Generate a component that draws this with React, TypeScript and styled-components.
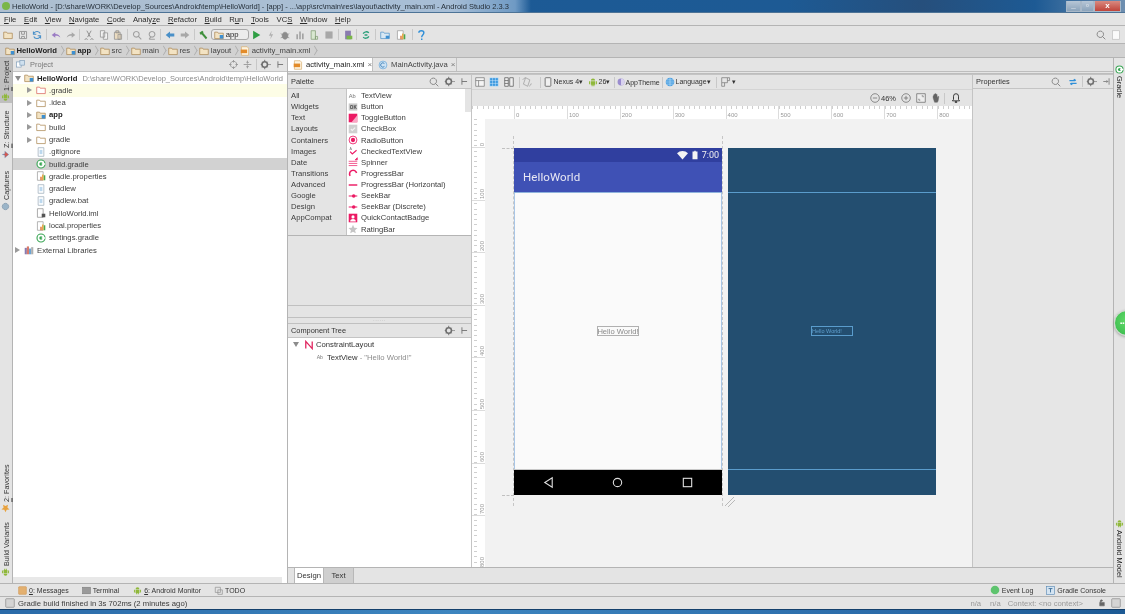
import React from "react";
import styled, { createGlobalStyle } from "styled-components";

const GlobalStyle = createGlobalStyle`
  html, body { margin: 0; padding: 0; background: #e4e4e4; overflow: hidden; }
  body { font-family: "Liberation Sans", Arial, sans-serif; font-size: 7.7px; color: #333; }
  u { text-decoration-thickness: 0.5px; text-underline-offset: 1px; }
`;

const Window = styled.div`
  position: relative;
  width: 1125px;
  height: 614px;
  display: flex;
  flex-direction: column;
  overflow: hidden;
  background: #e4e4e4;
  filter: blur(0.3px);
`;

const TitleBar = styled.div`
  height: 13px;
  flex: none;
  display: flex;
  align-items: center;
  background: linear-gradient(90deg, #1b5a98 0%, #1d5a94 70%, #264f7c 82%, #1d5a94 92%, #6f8fb0 100%);
  border-bottom: 1px solid #4d7396;
  box-sizing: border-box;
`;

const TitleGlow = styled.div`
  height: 12px;
  padding: 0 22px 0 12px;
  display: flex;
  align-items: center;
  color: #26303a;
  font-size: 7.5px;
  white-space: nowrap;
  background: linear-gradient(90deg, #aebfd0, #a7bed6 85%, #6f9ac4 97%, transparent);
`;

const AppIcon = styled.span`
  position: absolute;
  left: 2px;
  top: 2px;
  width: 8px;
  height: 8px;
  border-radius: 50%;
  background: #7ab648;
`;

const WindowButtons = styled.div`
  margin-left: auto;
  margin-right: 4px;
  display: flex;
  height: 11px;
`;

const WindowButton = styled.div<{ $close?: boolean; $w: number }>`
  width: ${(p) => p.$w}px;
  box-sizing: border-box;
  border: 1px solid #a8b8c8;
  border-top: none;
  background: ${(p) => (p.$close ? "linear-gradient(#d98a80,#c0443a)" : "linear-gradient(#b7c6d6,#8ba3bb)")};
  color: #fff;
  font-size: 8px;
  font-weight: bold;
  line-height: 10px;
  text-align: center;
`;

const MenuBar = styled.div`
  height: 13px;
  flex: none;
  box-sizing: border-box;
  display: flex;
  align-items: center;
  gap: 7.6px;
  padding-left: 4px;
  border-bottom: 1px solid #b4b4b4;
  color: #2b2b2b;
`;

const ToolBar = styled.div`
  height: 18px;
  flex: none;
  box-sizing: border-box;
  display: flex;
  align-items: center;
  padding-left: 1px;
  border-bottom: 1px solid #b4b4b4;
`;

const Slot = styled.div<{ $w?: number }>`
  width: ${(p) => p.$w ?? 14.6}px;
  flex: none;
  display: flex;
  align-items: center;
  justify-content: center;
`;

const Sep = styled.div`
  width: 1px;
  height: 11px;
  flex: none;
  margin: 0 1.5px;
  background: #c8c8c8;
`;

const Combo = styled.div`
  width: 38px;
  height: 11px;
  flex: none;
  box-sizing: border-box;
  display: flex;
  align-items: center;
  gap: 2px;
  padding-left: 2px;
  border: 1px solid #a8a8a8;
  border-radius: 3px;
  background: #ececec;
  color: #222;
`;

const Push = styled.div`
  margin-left: auto;
  display: flex;
  padding-right: 2px;
`;

const NavBar = styled.div`
  height: 14px;
  flex: none;
  box-sizing: border-box;
  display: flex;
  align-items: center;
  padding-left: 5px;
  background: #d2d2d2;
  border-bottom: 1px solid #b4b4b4;
`;

const Crumb = styled.div<{ $bold?: boolean }>`
  display: flex;
  align-items: center;
  gap: 1.5px;
  font-weight: ${(p) => (p.$bold ? "bold" : "normal")};
  color: ${(p) => (p.$bold ? "#222" : "#444")};
`;

const Chevron = styled.span`
  width: 7px;
  height: 7px;
  margin: 0 1px;
  box-sizing: border-box;
  border-top: 1px solid #aaa;
  border-right: 1px solid #aaa;
  transform: scaleX(0.6) rotate(45deg);
  flex: none;
`;

const Body = styled.div`
  flex: 1;
  min-height: 0;
  display: flex;
`;

const SideStrip = styled.div<{ $right?: boolean }>`
  width: ${(p) => (p.$right ? 12 : 13)}px;
  flex: none;
  box-sizing: border-box;
  display: flex;
  flex-direction: column;
  align-items: stretch;
  ${(p) => (p.$right ? "border-left: 1px solid #b4b4b4;" : "border-right: 1px solid #b4b4b4;")}
  padding-bottom: 5px;
`;

const SideTab = styled.div<{ $active?: boolean; $h: number; $mt?: number; $right?: boolean }>`
  height: ${(p) => p.$h}px;
  margin-top: ${(p) => p.$mt ?? 0}px;
  flex: none;
  display: flex;
  align-items: center;
  justify-content: flex-start;
  gap: 2px;
  padding: 1px 0;
  box-sizing: border-box;
  writing-mode: vertical-rl;
  transform: ${(p) => (p.$right ? "none" : "rotate(180deg)")};
  background: ${(p) => (p.$active ? "#bfbfbf" : "transparent")};
  color: ${(p) => (p.$right ? "#222" : "#333")};
  font-size: ${(p) => (p.$right ? 7.4 : 7.2)}px;
  white-space: nowrap;
`;

const Grow = styled.div`
  flex: 1;
`;

const ProjectPane = styled.div`
  width: 275px;
  flex: none;
  box-sizing: border-box;
  display: flex;
  flex-direction: column;
  background: #fff;
  border-right: 1px solid #b4b4b4;
`;

const PaneHeader = styled.div<{ $h?: number; $noTop?: boolean }>`
  height: ${(p) => p.$h ?? 14}px;
  flex: none;
  box-sizing: border-box;
  display: flex;
  align-items: center;
  background: #e4e4e4;
  border-bottom: 1px solid #c4c4c4;
  padding: 0 2px 0 3px;
  gap: 2px;
`;

const HeaderTitle = styled.span<{ $muted?: boolean }>`
  font-size: 7.4px;
  color: ${(p) => (p.$muted ? "#777" : "#333")};
`;

const Tree = styled.div`
  flex: 1;
  overflow: hidden;
`;

const TreeRow = styled.div<{ $tone?: "yellow" | "grey"; $indent: number }>`
  height: 12.29px;
  display: flex;
  align-items: center;
  padding-left: ${(p) => p.$indent}px;
  white-space: nowrap;
  overflow: hidden;
  background: ${(p) => (p.$tone === "yellow" ? "#fdfde6" : p.$tone === "grey" ? "#d2d2d2" : "transparent")};
`;

const Arrow = styled.span<{ $open?: boolean; $hidden?: boolean; $ml?: number }>`
  width: 13px;
  margin-left: ${(p) => p.$ml ?? 0}px;
  flex: none;
  display: flex;
  justify-content: center;
  visibility: ${(p) => (p.$hidden ? "hidden" : "visible")};
  &::before {
    content: "";
    border-style: solid;
    border-color: transparent;
    ${(p) =>
      p.$open
        ? "border-width: 5px 3px 0 3px; border-top-color: #8c8c8c;"
        : "border-width: 3px 0 3px 5px; border-left-color: #9a9a9a;"}
  }
`;

const TreeLabel = styled.span<{ $bold?: boolean }>`
  margin-left: 3px;
  font-weight: ${(p) => (p.$bold ? "bold" : "normal")};
  color: ${(p) => (p.$bold ? "#222" : "#3c3c3c")};
`;

const TreePath = styled.span`
  margin-left: 5px;
  color: #8a8a8a;
  font-size: 7.5px;
`;

const HScroll = styled.div`
  height: 6px;
  width: 269px;
  flex: none;
  background: #e8e8e8;
`;

const Editor = styled.div`
  flex: 1;
  min-width: 0;
  display: flex;
  flex-direction: column;
`;

const EditorTabs = styled.div`
  height: 16px;
  flex: none;
  box-sizing: border-box;
  display: flex;
  border-bottom: 3px double #bdbdbd;
`;

const EditorTab = styled.div<{ $active?: boolean; $w: number }>`
  width: ${(p) => p.$w}px;
  flex: none;
  box-sizing: border-box;
  display: flex;
  align-items: center;
  gap: 3px;
  padding-left: 5px;
  border-right: 1px solid #c0c0c0;
  background: ${(p) => (p.$active ? "#fff" : "#e4e4e4")};
  color: ${(p) => (p.$active ? "#222" : "#444")};
`;

const TabClose = styled.span`
  margin-left: auto;
  margin-right: 3px;
  color: #777;
  font-size: 8px;
`;

const DesignArea = styled.div`
  flex: 1;
  min-height: 0;
  display: flex;
`;

const LeftColumn = styled.div`
  width: 184px;
  flex: none;
  box-sizing: border-box;
  display: flex;
  flex-direction: column;
  border-right: 1px solid #c4c4c4;
`;

const PanelHeader = styled(PaneHeader)`
  border-top: ${(p) => (p.$noTop ? "none" : "1px solid #c4c4c4")};
  height: ${(p) => (p.$noTop ? 14 : 15)}px;
`;

const Palette = styled.div`
  height: 146px;
  flex: none;
  display: flex;
  border-bottom: 1px solid #b4b4b4;
`;

const PaletteGroups = styled.div`
  width: 59px;
  flex: none;
  box-sizing: border-box;
  padding: 1px 0 0 3px;
  border-right: 1px solid #c4c4c4;
`;

const PaletteText = styled.div`
  height: 11.14px;
  line-height: 11.14px;
  color: #3c3c3c;
  white-space: nowrap;
`;

const PaletteList = styled.div`
  flex: 1;
  position: relative;
  background: #fff;
  padding-top: 1px;
`;

const PaletteItem = styled.div`
  height: 11.14px;
  display: flex;
  align-items: center;
  gap: 3px;
  padding-left: 1px;
  color: #3c3c3c;
  white-space: nowrap;
`;

const PaletteScroll = styled.div`
  position: absolute;
  right: 0;
  top: 0;
  width: 6px;
  height: 23px;
  background: #e4e4e4;
`;

const Spacer = styled.div<{ $h: number; $line?: boolean }>`
  height: ${(p) => p.$h}px;
  flex: none;
  ${(p) => (p.$line ? "border-bottom: 1px solid #c0c0c0;" : "")}
`;

const Splitter = styled.div`
  height: 5px;
  flex: none;
  border-top: 1px solid #c0c0c0;
  border-bottom: 1px solid #c0c0c0;
  display: flex;
  align-items: center;
  justify-content: center;
  color: #aaa;
  font-size: 5px;
  line-height: 5px;
  letter-spacing: 0.5px;
`;

const ComponentTree = styled.div`
  flex: 1;
  background: #fff;
`;

const CompRow = styled.div<{ $indent: number }>`
  height: 13px;
  display: flex;
  align-items: center;
  gap: 2px;
  padding-left: ${(p) => p.$indent}px;
`;

const Muted = styled.span`
  color: #8c8c8c;
`;

const Center = styled.div`
  flex: 1;
  min-width: 0;
  display: flex;
  flex-direction: column;
`;

const DesignToolbar = styled.div`
  height: 15px;
  flex: none;
  box-sizing: border-box;
  border-top: 1px solid #c4c4c4;
  display: flex;
  align-items: center;
  padding-left: 3px;
  font-size: 7px;
  color: #333;
`;

const DesignItem = styled.div<{ $w: number }>`
  width: ${(p) => p.$w}px;
  flex: none;
  display: flex;
  align-items: center;
  gap: 1px;
  white-space: nowrap;
`;

const ZoomBar = styled.div`
  height: 17px;
  flex: none;
  box-sizing: border-box;
  border-top: 1px solid #d4d4d4;
  display: flex;
  align-items: center;
  justify-content: flex-end;
  gap: 1px;
  padding-right: 11px;
  font-size: 7.5px;
  color: #333;
`;

const RulerTop = styled.div`
  height: 13px;
  flex: none;
  display: flex;
  padding-left: 42px;
  background:
    repeating-linear-gradient(90deg, #cfcfcf 0 1px, transparent 1px 5.29px) 0 0 / 100% 3px no-repeat,
    #fff;
  box-sizing: border-box;
  overflow: hidden;
`;

const RulerCell = styled.div`
  width: 52.9px;
  flex: none;
  box-sizing: border-box;
  padding: 5px 0 0 1px;
  border-left: 1px solid #dcdcdc;
  font-size: 6px;
  line-height: 8px;
  color: #999;
`;

const CanvasRow = styled.div`
  flex: 1;
  min-height: 0;
  display: flex;
`;

const RulerLeft = styled.div`
  width: 13px;
  flex: none;
  background:
    repeating-linear-gradient(180deg, #cfcfcf 0 1px, transparent 1px 5.27px) 2px 0 / 3px 100% no-repeat,
    #fff;
  overflow: hidden;
`;

const RulerLeftCell = styled.div`
  height: 52.6px;
  box-sizing: border-box;
  border-bottom: 1px solid #dcdcdc;
  display: flex;
  justify-content: flex-end;
  align-items: flex-end;
  padding-bottom: 1px;
  font-size: 6px;
  color: #999;
  &:first-child {
    height: 29px;
  }
  & > span {
    writing-mode: vertical-rl;
    transform: rotate(180deg);
  }
`;

const Canvas = styled.div`
  position: relative;
  flex: 1;
  min-width: 0;
  display: flex;
  align-items: flex-start;
  gap: 6px;
  padding: 29px 0 0 29px;
  background: #f2f2f2;
  overflow: hidden;
`;

const Phone = styled.div`
  width: 208px;
  height: 347px;
  flex: none;
  display: flex;
  flex-direction: column;
`;

const StatusStrip = styled.div`
  height: 14px;
  flex: none;
  display: flex;
  align-items: center;
  justify-content: flex-end;
  gap: 2px;
  padding-right: 3px;
  background: #303f9f;
  color: #f0f0f0;
  font-family: Roboto, "Liberation Sans", sans-serif;
  font-size: 9px;
`;

const AppBar = styled.div`
  height: 31px;
  flex: none;
  box-sizing: border-box;
  display: flex;
  align-items: center;
  padding-left: 9px;
  background: #3f51b5;
  color: #e8e8f4;
  font-family: Roboto, "Liberation Sans", sans-serif;
  font-size: 11.5px;
  letter-spacing: 0.1px;
  border-bottom: 1px solid #8fb3dc;
`;

const PhoneContent = styled.div`
  flex: 1;
  display: flex;
  align-items: center;
  justify-content: center;
  box-sizing: border-box;
  background: #fafafa;
  border-left: 1px solid #a9c6e6;
  border-right: 1px solid #a9c6e6;
`;

const HelloBox = styled.div`
  width: 42px;
  height: 10px;
  box-sizing: border-box;
  display: flex;
  align-items: center;
  justify-content: center;
  border: 1px solid #b0b0b0;
  color: #8a8a8a;
  font-size: 7.6px;
  white-space: nowrap;
`;

const NavStrip = styled.div`
  height: 26px;
  flex: none;
  display: flex;
  align-items: center;
  justify-content: space-around;
  background: #000;
  border-top: 1px solid #c8c8c8;
  box-sizing: border-box;
`;

const Blueprint = styled.div`
  width: 208px;
  height: 347px;
  flex: none;
  box-sizing: border-box;
  display: flex;
  flex-direction: column;
  background: #234e70;
`;

const BlueTop = styled.div`
  height: 44px;
  flex: none;
  border-bottom: 1px solid #5a9ccc;
`;

const BlueMiddle = styled.div`
  flex: 1;
  display: flex;
  align-items: center;
  justify-content: center;
  border-bottom: 1px solid #5a9ccc;
`;

const BlueBox = styled.div`
  width: 42px;
  height: 10px;
  box-sizing: border-box;
  border: 1px solid #5a9ccc;
  color: #5f9fce;
  font-size: 5.5px;
  line-height: 8px;
  white-space: nowrap;
  overflow: hidden;
`;

const BlueBottom = styled.div`
  height: 25px;
  flex: none;
`;

/* guides and the resize handle lie over the free canvas */
const GuideV = styled.div<{ $x: number }>`
  position: absolute;
  left: ${(p) => p.$x}px;
  top: 17px;
  height: 370px;
  border-left: 1px dashed #c6c6c6;
`;

const GuideH = styled.div<{ $y: number }>`
  position: absolute;
  left: 17px;
  top: ${(p) => p.$y}px;
  width: 12px;
  border-top: 1px dashed #c0c0c0;
`;

const ResizeHandle = styled.svg`
  position: absolute;
  left: 239px;
  top: 377px;
`;

const Properties = styled.div`
  width: 141px;
  flex: none;
  box-sizing: border-box;
  border-left: 1px solid #c4c4c4;
  background: #e6e6e6;
`;

const DesignTabs = styled.div`
  height: 16px;
  flex: none;
  box-sizing: border-box;
  display: flex;
  padding-left: 6px;
  border-top: 1px solid #b4b4b4;
`;

const DesignTab = styled.div<{ $active?: boolean }>`
  width: 30px;
  flex: none;
  box-sizing: border-box;
  display: flex;
  align-items: center;
  justify-content: center;
  background: ${(p) => (p.$active ? "#fff" : "#cfcfcf")};
  border-right: 1px solid #b8b8b8;
  ${(p) => (p.$active ? "border-left: 1px solid #b8b8b8;" : "")}
  color: #333;
`;

const BottomBar = styled.div`
  height: 14px;
  flex: none;
  box-sizing: border-box;
  display: flex;
  align-items: center;
  padding: 0 19px 0 18px;
  border-top: 1px solid #b4b4b4;
  border-bottom: 1px solid #b4b4b4;
  color: #333;
  font-size: 7px;
`;

const BottomItem = styled.div<{ $ml?: number }>`
  display: flex;
  align-items: center;
  gap: 2px;
  margin-left: ${(p) => p.$ml ?? 0}px;
  white-space: nowrap;
`;

const StatusBar = styled.div`
  height: 12px;
  flex: none;
  display: flex;
  align-items: center;
  gap: 3px;
  padding: 0 4px 0 5px;
  color: #3a3a3a;
`;

const StatusRight = styled.div`
  margin-left: auto;
  display: flex;
  align-items: center;
  color: #999;
`;

const Taskbar = styled.div`
  height: 5px;
  flex: none;
  background: linear-gradient(90deg, #2a6aa8, #3d85bf 40%, #2a6aa8 80%, #1d5a94);
  border-top: 1px solid #14406c;
  box-sizing: border-box;
`;

const GreenBubble = styled.div`
  position: absolute;
  left: 1114px;
  top: 310px;
  width: 26px;
  height: 26px;
  box-sizing: border-box;
  border: 1px solid #cfd8cf;
  border-radius: 50%;
  background: radial-gradient(circle at 50% 40%, #63da6a, #34b84a);
  box-shadow: 0 1px 3px rgba(0, 0, 0, 0.3);
  color: #fff;
  font-size: 6px;
  line-height: 24px;
  padding-left: 5px;
`;

const Svg = styled.svg`
  flex: none;
  display: block;
`;

type IconName =
  | "folder" | "save" | "sync" | "undo" | "redo" | "cut" | "copy" | "paste" | "find" | "replace"
  | "back" | "forward" | "hammer" | "run" | "bolt" | "bug" | "attach" | "device" | "stop" | "avd"
  | "gradleSync" | "sdk" | "help" | "search" | "user" | "gear" | "pin" | "pinR" | "target" | "collapse"
  | "xml" | "java" | "module" | "redFolder" | "plainFolder" | "file" | "gradle" | "props" | "iml" | "libs"
  | "android" | "star" | "camera" | "tree" | "projectBox" | "msg" | "term" | "todo" | "bubble" | "console"
  | "frame" | "lock" | "swap" | "ab" | "ok" | "toggle" | "check" | "radio" | "checked" | "spinner"
  | "progress" | "hbar" | "seek" | "badge" | "rating" | "constraint" | "lay1" | "lay2" | "lay3" | "orient"
  | "phone" | "theme" | "globe" | "layout" | "minus" | "plus" | "fit" | "hand" | "bell" | "wifi" | "battery"
  | "navBack" | "navHome" | "navRecent";

const folderD = "M1 3h4l1 1.5h7V12H1z";

const paths: Record<IconName, React.ReactNode> = {
  folder: <path d={folderD} fill="#f3e3c3" stroke="#a9854f" />,
  plainFolder: <path d={folderD} fill="#fff" stroke="#a9854f" />,
  redFolder: <path d={folderD} fill="#fff" stroke="#d8605a" />,
  module: (
    <>
      <path d={folderD} fill="#f3e3c3" stroke="#a9854f" />
      <rect x="8" y="7" width="5" height="5" fill="#3d8fd1" />
    </>
  ),
  save: <path d="M2 2h10v10H2zM5 2v4h4V2M5 12V9h4v3" fill="none" stroke="#9a9a9a" strokeWidth="1.4" />,
  sync: <path d="M11.5 5A5 5 0 0 0 3 4L2 6M2.5 9A5 5 0 0 0 11 10l1-2M2 2v4h4M12 12V8H8" fill="none" stroke="#4a90c8" strokeWidth="1.5" />,
  undo: <path d="M1 7l5-4v2.5c4 0 6 2 7 5-2-2-4-2.5-7-2.5V11z" fill="#9b7cc4" />,
  redo: <path d="M13 7L8 3v2.5c-4 0-6 2-7 5 2-2 4-2.5 7-2.5V11z" fill="#a8a8a8" />,
  cut: <path d="M4 1l5 9M10 1L5 10M3 12a1.5 1.5 0 1 0 .1 0M11 12a1.5 1.5 0 1 0 .1 0" fill="none" stroke="#8c8c8c" strokeWidth="1.3" />,
  copy: <path d="M2 1h6v9H2zM6 4h6v9H6z" fill="#f2f2f2" stroke="#8c8c8c" />,
  paste: <path d="M2 3h8v10H2zM7 6h5v7H7zM4 1h4v3H4z" fill="#ecdcc0" stroke="#8c8c8c" />,
  find: <path d="M6 2a4 4 0 1 0 .1 0M9 9l4 4" fill="none" stroke="#a0a0a0" strokeWidth="1.5" />,
  replace: <path d="M7 2a4 4 0 1 0 .1 0M3 13h8M5 10l-2 3" fill="none" stroke="#a0a0a0" strokeWidth="1.5" />,
  back: <path d="M1 7l6-5v3h6v4H7v3z" fill="#4a90c8" />,
  forward: <path d="M13 7L7 2v3H1v4h6v3z" fill="#a8a8a8" />,
  hammer: <path d="M2 4l4-3 2 2-1 1 6 7-2 2-6-7-1 1z" fill="#3f8f3c" />,
  run: <path d="M3 1l10 6-10 6z" fill="#2f9e44" />,
  bolt: <path d="M8 1L4 8h3l-1 5 4-7H7z" fill="#b0b0b0" />,
  bug: <path d="M7 3a4 5 0 1 0 .1 0M1 5l3 2M13 5l-3 2M1 11l3-1M13 11l-3-1" fill="#8c8c8c" stroke="#8c8c8c" />,
  attach: <path d="M2 6h2v7H2zM6 2h2v11H6zM10 5h2v8h-2z" fill="#9a9a9a" />,
  device: <path d="M3 1h6v12H3z M9 9h3v4H9z" fill="#d8e8d0" stroke="#7f9a72" />,
  stop: <rect x="2" y="2" width="10" height="10" fill="#a8a8a8" />,
  avd: (
    <>
      <rect x="3" y="1" width="8" height="12" fill="#8a7bb0" />
      <rect x="5" y="8" width="8" height="5" fill="#7ab648" />
    </>
  ),
  gradleSync: <path d="M11 4A5 5 0 0 0 3 5M3 10a5 5 0 0 0 8-1M5 7h4" fill="none" stroke="#2aa07a" strokeWidth="1.8" />,
  sdk: (
    <>
      <path d={folderD} fill="#d8e8f4" stroke="#4a90c8" />
      <rect x="8" y="8" width="5" height="4" fill="#3d8fd1" />
    </>
  ),
  help: <path d="M4 4c0-4 7-4 7 0 0 3-3 3-3 6M8 12v2" fill="none" stroke="#2f8fd8" strokeWidth="2" />,
  search: <path d="M6 1.5a4.5 4.5 0 1 0 .1 0M9.5 9.5L13 13" fill="none" stroke="#8a8a8a" strokeWidth="1.4" />,
  user: <rect x="2" y="1" width="10" height="12" fill="#fafafa" stroke="#c0c0c0" />,
  gear: (
    <>
      <circle cx="6" cy="7" r="3.5" fill="none" stroke="#6e6e6e" strokeWidth="2" />
      <path d="M6 1v2M6 11v2M1 7h2M9 7h2M2.5 3.5l1.5 1.5M9.5 3.5L8 5M2.5 10.5L4 9M9.5 10.5L8 9" stroke="#6e6e6e" strokeWidth="1.2" />
      <path d="M11.5 6.5h2.5l-1.25 1.5z" fill="#6e6e6e" />
    </>
  ),
  pin: <path d="M3 2v10M3 7h8" fill="none" stroke="#707070" strokeWidth="1.4" />,
  pinR: <path d="M11 2v10M2 7h7M7 5l2 2-2 2" fill="none" stroke="#707070" strokeWidth="1.2" />,
  target: <path d="M7 2a5 5 0 1 0 .1 0M7 0v4M7 10v4M0 7h4M10 7h4" fill="none" stroke="#8c8c8c" strokeWidth="1.2" />,
  collapse: <path d="M7 1v4M7 9v4M1 7h12M5 3l2 2 2-2M5 11l2-2 2 2" fill="none" stroke="#8c8c8c" strokeWidth="1.2" />,
  xml: (
    <>
      <path d="M2 1h8l2 2v10H2z" fill="#fdf3df" stroke="#d9b277" />
      <rect x="1" y="5" width="9" height="5" fill="#e38b28" />
    </>
  ),
  java: (
    <>
      <circle cx="7" cy="7" r="5.5" fill="#cfe4f5" stroke="#6aa6d6" />
      <path d="M9 5a3 3 0 1 0 0 4" fill="none" stroke="#3d7fb8" strokeWidth="1.3" />
    </>
  ),
  file: (
    <>
      <path d="M3 1h8v12H3z" fill="#fff" stroke="#9aaab8" />
      <rect x="5" y="4" width="4" height="6" fill="#bcd8ee" />
    </>
  ),
  gradle: (
    <>
      <circle cx="7" cy="7" r="5.6" fill="#fff" stroke="#3aa655" strokeWidth="1.6" />
      <circle cx="7" cy="7" r="2.4" fill="#3aa655" />
      <rect x="8" y="6" width="5" height="2" fill="#fff" />
    </>
  ),
  props: (
    <>
      <path d="M2 1h8v12H2z" fill="#fff" stroke="#9a9a9a" />
      <rect x="6" y="8" width="2" height="5" fill="#e0703a" />
      <rect x="8.5" y="5" width="2" height="8" fill="#e8a83a" />
      <rect x="11" y="6" width="2" height="7" fill="#4aa84a" />
    </>
  ),
  iml: (
    <>
      <path d="M2 1h8v12H2z" fill="#fff" stroke="#8c8c8c" />
      <rect x="8" y="8" width="5" height="5" fill="#555" />
    </>
  ),
  libs: (
    <>
      <rect x="1" y="4" width="3" height="9" fill="#8a7bb0" />
      <rect x="4" y="2" width="3" height="11" fill="#d87a6a" />
      <rect x="7" y="5" width="3" height="8" fill="#6aa6d6" />
      <rect x="10" y="3" width="3" height="10" fill="#b0b0b0" />
    </>
  ),
  android: <path d="M4 5a3 3 0 0 1 6 0zM4 6h6v5H4zM1.5 6h1.5v4H1.5zM11 6h1.5v4H11zM5 11h1.5v2H5zM7.5 11H9v2H7.5z" fill="#8fb83a" />,
  star: <path d="M7 1l1.8 4.2 4.5.4-3.4 3 1 4.4L7 10.8 3.100 13l1-4.4-3.400-3 4.500-.4z" fill="#e8a13c" />,
  camera: <path d="M7 2a5 5 0 1 0 .1 0" fill="#9ab4c8" stroke="#7a92a6" />,
  tree: <path d="M2 7l6-5v4l4 1-4 1v4z" fill="#d8584e" stroke="#4a90c8" strokeWidth="0.6" />,
  projectBox: (
    <>
      <rect x="1" y="3" width="7" height="8" fill="#fff" stroke="#7a9ab8" />
      <rect x="6" y="1" width="7" height="7" fill="#cfe0ee" stroke="#7a9ab8" />
    </>
  ),
  msg: <rect x="1" y="1" width="12" height="12" rx="1" fill="#e3b070" stroke="#d09a58" />,
  term: <rect x="1" y="2" width="12" height="10" fill="#9a9a9a" stroke="#7f7f7f" />,
  todo: <path d="M2 2h8v8H2zM6 6h7v7H6z" fill="#e4e4e4" stroke="#8c8c8c" />,
  bubble: <circle cx="7" cy="7" r="6" fill="#5ec46e" />,
  console: (
    <>
      <rect x="1" y="1" width="12" height="12" fill="#d4e4f2" stroke="#5c8db8" />
      <path d="M4 4h6M7 4v6" stroke="#3d6f9a" strokeWidth="1.4" />
    </>
  ),
  frame: <rect x="1" y="1" width="12" height="12" rx="1" fill="#d4d4d4" stroke="#8c8c8c" />,
  lock: <path d="M4 6V3.500a2 2 0 0 1 4 0M3 6h8v6H3z" fill="#666" stroke="#666" />,
  swap: <path d="M2 5h8M8 3l3 2M12 9H4M6 11L3 9" fill="none" stroke="#2f8fd8" strokeWidth="1.6" />,
  ab: <text x="1" y="10" fontSize="8" fontFamily="Liberation Sans" fill="#777">Ab</text>,
  ok: (
    <>
      <rect x="1" y="2" width="12" height="10" fill="#c8c8c8" />
      <text x="2.5" y="10" fontSize="6.5" fontWeight="bold" fontFamily="Liberation Sans" fill="#444">OK</text>
    </>
  ),
  toggle: (
    <>
      <rect x="1" y="1" width="12" height="12" fill="#ec1a64" />
      <path d="M5 13L13 3v10z" fill="#f8a8c4" />
    </>
  ),
  check: (
    <>
      <rect x="1" y="1" width="12" height="12" fill="#cfcfcf" />
      <path d="M4 7l2 2 4-4" fill="none" stroke="#f4f4f4" strokeWidth="1.5" />
    </>
  ),
  radio: (
    <>
      <circle cx="7" cy="7" r="5.500" fill="none" stroke="#ec1a64" strokeWidth="1.2" />
      <circle cx="7" cy="7" r="3" fill="#ec1a64" />
    </>
  ),
  checked: (
    <>
      <path d="M3 8l3 3 6-5" fill="none" stroke="#ec1a64" strokeWidth="1.6" />
      <text x="2" y="6" fontSize="5" fontFamily="Liberation Sans" fill="#777">A</text>
    </>
  ),
  spinner: <path d="M1 6h12M1 9h12M1 12h12M13 1v3h-3z" stroke="#ec1a64" fill="#ec1a64" strokeWidth="1" />,
  progress: <path d="M3 11A5 5 0 1 1 12 7" fill="none" stroke="#ec1a64" strokeWidth="2.2" />,
  hbar: <rect x="1" y="6" width="12" height="2" fill="#ec1a64" />,
  seek: (
    <>
      <rect x="1" y="6.300" width="12" height="1.400" fill="#ec1a64" />
      <circle cx="8" cy="7" r="2.500" fill="#ec1a64" />
    </>
  ),
  badge: (
    <>
      <rect x="1" y="1" width="12" height="12" fill="#ec1a64" />
      <circle cx="7" cy="5.500" r="2.200" fill="#fff" />
      <path d="M3 12a4 3.500 0 0 1 8 0z" fill="#fff" />
    </>
  ),
  rating: <path d="M7 1l1.800 4.200 4.500.4-3.400 3 1 4.400L7 10.800 3.100 13l1-4.400-3.400-3 4.500-.4z" fill="#c4c4c4" />,
  constraint: <path d="M2.500 12V2l9 10V2" fill="none" stroke="#e0245e" strokeWidth="1.800" />,
  lay1: <path d="M1 1h12v12H1zM1 5h12M5 5v8" fill="#f4f4f4" stroke="#777" />,
  lay2: <path d="M1 1h12v12H1zM1 5h12M1 9h12M5 1v12M9 1v12" fill="#3d9ae0" stroke="#e8f4ff" strokeWidth="0.600" />,
  lay3: <path d="M1 1h5v12H1zM8 1h5v12H8zM1 5h5M1 9h5" fill="#f0f0f0" stroke="#555" />,
  orient: <path d="M5 1l6 3-3 9-6-3zM1 4a6 6 0 0 1 4-3M13 9a6 6 0 0 1-3 4" fill="none" stroke="#999" />,
  phone: <rect x="3" y="1" width="8" height="12" rx="1" fill="#f0f0f0" stroke="#666" strokeWidth="1.200" />,
  theme: (
    <>
      <circle cx="7" cy="7" r="6" fill="#9a8ccf" />
      <path d="M7 1a6 6 0 0 1 0 12z" fill="#d8d2ee" />
    </>
  ),
  globe: (
    <>
      <circle cx="7" cy="7" r="6" fill="#4a9ee0" />
      <path d="M1 7h12M7 1v12M2 4h10M2 10h10" stroke="#d4ecfc" strokeWidth="0.700" />
    </>
  ),
  layout: <path d="M1 1h8v7H1zM1 8v5h4V8M9 1h3v4H9" fill="none" stroke="#777" />,
  minus: <path d="M7 1a6 6 0 1 0 .1 0M4 7h6" fill="none" stroke="#666" />,
  plus: <path d="M7 1a6 6 0 1 0 .1 0M4 7h6M7 4v6" fill="none" stroke="#666" />,
  fit: <path d="M1 1h12v12H1zM8 4h2v2M4 10V8M4 10h2" fill="#eee" stroke="#666" />,
  hand: <path d="M3 7V4h1v3-5h1.500v5V1H7v6V2h1.500v5l1-2H11l-1 6-1 2H5z" fill="#666" stroke="#666" strokeWidth="0.600" />,
  bell: <path d="M7 1a3.500 3.500 0 0 0-3.500 3.500V9L2 11h10l-1.500-2V4.500A3.500 3.500 0 0 0 7 1zM6 12h2v1.500H6z" fill="none" stroke="#222" strokeWidth="1.200" />,
  wifi: <path d="M0 4a10 10 0 0 1 14 0L7 12z" fill="#f4f4f4" />,
  battery: <path d="M3.500 2H6V1h2v1h2.500v11h-7z" fill="#f4f4f4" />,
  navBack: <path d="M11 2v10L3 7z" fill="none" stroke="#ddd" strokeWidth="1.200" />,
  navHome: <circle cx="7" cy="7" r="4.500" fill="none" stroke="#ddd" strokeWidth="1.200" />,
  navRecent: <rect x="2.500" y="2.500" width="9" height="9" fill="none" stroke="#ddd" strokeWidth="1.200" />,
};

const Icon = ({ name, size = 10 }: { name: IconName; size?: number }) => (
  <Svg width={size} height={size} viewBox="0 0 14 14">
    {paths[name]}
  </Svg>
);

const menus: [string, string, string][] = [
  ["", "F", "ile"], ["", "E", "dit"], ["", "V", "iew"], ["", "N", "avigate"], ["", "C", "ode"],
  ["Analy", "z", "e"], ["", "R", "efactor"], ["", "B", "uild"], ["R", "u", "n"], ["", "T", "ools"],
  ["VC", "S", ""], ["", "W", "indow"], ["", "H", "elp"],
];

type ToolGroup = IconName[];
const toolsA: ToolGroup[] = [
  ["folder", "save", "sync"],
  ["undo", "redo"],
  ["cut", "copy", "paste"],
  ["find", "replace"],
  ["back", "forward"],
];
const toolsB: ToolGroup[] = [
  ["run", "bolt", "bug", "attach", "device", "stop"],
  ["avd"],
  ["gradleSync"],
  ["sdk", "props"],
  ["help"],
];

const crumbs: { icon: IconName; label: string; bold?: boolean }[] = [
  { icon: "module", label: "HelloWorld", bold: true },
  { icon: "module", label: "app", bold: true },
  { icon: "folder", label: "src" },
  { icon: "folder", label: "main" },
  { icon: "folder", label: "res" },
  { icon: "folder", label: "layout" },
  { icon: "xml", label: "activity_main.xml" },
];

const treeItems: { icon: IconName; label: string; arrow?: boolean; bold?: boolean; tone?: "yellow" | "grey" }[] = [
  { icon: "redFolder", label: ".gradle", arrow: true, tone: "yellow" },
  { icon: "plainFolder", label: ".idea", arrow: true },
  { icon: "module", label: "app", arrow: true, bold: true },
  { icon: "plainFolder", label: "build", arrow: true },
  { icon: "plainFolder", label: "gradle", arrow: true },
  { icon: "file", label: ".gitignore" },
  { icon: "gradle", label: "build.gradle", tone: "grey" },
  { icon: "props", label: "gradle.properties" },
  { icon: "file", label: "gradlew" },
  { icon: "file", label: "gradlew.bat" },
  { icon: "iml", label: "HelloWorld.iml" },
  { icon: "props", label: "local.properties" },
  { icon: "gradle", label: "settings.gradle" },
];

const groups = ["All", "Widgets", "Text", "Layouts", "Containers", "Images", "Date", "Transitions", "Advanced", "Google", "Design", "AppCompat"];

const widgets: [IconName, string][] = [
  ["ab", "TextView"], ["ok", "Button"], ["toggle", "ToggleButton"], ["check", "CheckBox"],
  ["radio", "RadioButton"], ["checked", "CheckedTextView"], ["spinner", "Spinner"], ["progress", "ProgressBar"],
  ["hbar", "ProgressBar (Horizontal)"], ["seek", "SeekBar"], ["seek", "SeekBar (Discrete)"],
  ["badge", "QuickContactBadge"], ["rating", "RatingBar"],
];

const ticks = [0, 100, 200, 300, 400, 500, 600, 700, 800];

export default function App() {
  return (
    <>
      <GlobalStyle />
      <Window>
        <TitleBar>
          <AppIcon />
          <TitleGlow>
            HelloWorld - [D:\share\WORK\Develop_Sources\Android\temp\HelloWorld] - [app] - ...\app\src\main\res\layout\activity_main.xml - Android Studio 2.3.3
          </TitleGlow>
          <WindowButtons>
            <WindowButton $w={15}>_</WindowButton>
            <WindowButton $w={13}>▫</WindowButton>
            <WindowButton $w={27} $close>x</WindowButton>
          </WindowButtons>
        </TitleBar>

        <MenuBar>
          {menus.map(([a, b, c]) => (
            <span key={a + b + c}>
              {a}
              <u>{b}</u>
              {c}
            </span>
          ))}
        </MenuBar>

        <ToolBar>
          {toolsA.map((g, i) => (
            <React.Fragment key={i}>
              {g.map((n) => (
                <Slot key={n}>
                  <Icon name={n} />
                </Slot>
              ))}
              <Sep />
            </React.Fragment>
          ))}
          <Slot>
            <Icon name="hammer" />
          </Slot>
          <Combo>
            <Icon name="module" />
            app
          </Combo>
          {toolsB.map((g, i) => (
            <React.Fragment key={i}>
              {g.map((n) => (
                <Slot key={n} $w={n === "props" ? 18 : 14.6}>
                  <Icon name={n} />
                </Slot>
              ))}
              {i < toolsB.length - 1 && <Sep />}
            </React.Fragment>
          ))}
          <Push>
            <Slot><Icon name="search" /></Slot>
            <Slot><Icon name="user" /></Slot>
          </Push>
        </ToolBar>

        <NavBar>
          {crumbs.map((c) => (
            <React.Fragment key={c.label}>
              <Crumb $bold={c.bold}>
                <Icon name={c.icon} />
                {c.label}
              </Crumb>
              <Chevron />
            </React.Fragment>
          ))}
        </NavBar>

        <Body>
          <SideStrip>
            <SideTab $active $h={45}>
              <Icon name="android" size={9} />
              <span><u>1</u>: Project</span>
            </SideTab>
            <SideTab $h={48} $mt={9}>
              <Icon name="tree" size={9} />
              <span><u>Z</u>: Structure</span>
            </SideTab>
            <SideTab $h={42} $mt={10}>
              <Icon name="camera" size={9} />
              <span>Captures</span>
            </SideTab>
            <Grow />
            <SideTab $h={48}>
              <Icon name="star" size={9} />
              <span><u>2</u>: Favorites</span>
            </SideTab>
            <SideTab $h={60} $mt={4}>
              <Icon name="android" size={9} />
              <span>Build Variants</span>
            </SideTab>
          </SideStrip>

          <ProjectPane>
            <PaneHeader>
              <Icon name="projectBox" size={9} />
              <Slot $w={1} />
              <HeaderTitle $muted>Project</HeaderTitle>
              <Grow />
              <Icon name="target" size={9} />
              <Slot $w={1} />
              <Icon name="collapse" size={9} />
              <Sep />
              <Icon name="gear" size={11} />
              <Slot $w={1} />
              <Icon name="pin" size={9} />
            </PaneHeader>
            <Tree>
              <TreeRow $indent={0}>
                <Arrow $open $ml={-2} />
                <Icon name="module" />
                <TreeLabel $bold>HelloWorld</TreeLabel>
                <TreePath>D:\share\WORK\Develop_Sources\Android\temp\HelloWorld</TreePath>
              </TreeRow>
              {treeItems.map((t) => (
                <TreeRow key={t.label} $indent={10} $tone={t.tone}>
                  <Arrow $hidden={!t.arrow} />
                  <Icon name={t.icon} />
                  <TreeLabel $bold={t.bold}>{t.label}</TreeLabel>
                </TreeRow>
              ))}
              <TreeRow $indent={0}>
                <Arrow $ml={-2} />
                <Icon name="libs" />
                <TreeLabel>External Libraries</TreeLabel>
              </TreeRow>
            </Tree>
            <HScroll />
          </ProjectPane>

          <Editor>
            <EditorTabs>
              <EditorTab $active $w={85}>
                <Icon name="xml" />
                activity_main.xml
                <TabClose>×</TabClose>
              </EditorTab>
              <EditorTab $w={84}>
                <Icon name="java" />
                MainActivity.java
                <TabClose>×</TabClose>
              </EditorTab>
            </EditorTabs>

            <DesignArea>
              <LeftColumn>
                <PanelHeader>
                  <HeaderTitle>Palette</HeaderTitle>
                  <Grow />
                  <Icon name="search" />
                  <Slot $w={1} />
                  <Icon name="gear" size={11} />
                  <Slot $w={1} />
                  <Icon name="pin" size={9} />
                </PanelHeader>
                <Palette>
                  <PaletteGroups>
                    {groups.map((g) => (
                      <PaletteText key={g}>{g}</PaletteText>
                    ))}
                  </PaletteGroups>
                  <PaletteList>
                    {widgets.map(([icon, label]) => (
                      <PaletteItem key={label}>
                        <Icon name={icon} />
                        {label}
                      </PaletteItem>
                    ))}
                    <PaletteScroll />
                  </PaletteList>
                </Palette>
                <Spacer $h={69} $line />
                <Spacer $h={11} />
                <Splitter>······</Splitter>
                <PanelHeader $noTop>
                  <HeaderTitle>Component Tree</HeaderTitle>
                  <Grow />
                  <Icon name="gear" size={11} />
                  <Slot $w={1} />
                  <Icon name="pin" size={9} />
                </PanelHeader>
                <ComponentTree>
                  <CompRow $indent={1}>
                    <Arrow $open />
                    <Icon name="constraint" />
                    ConstraintLayout
                  </CompRow>
                  <CompRow $indent={28}>
                    <Icon name="ab" size={9} />
                    <span>TextView</span>
                    <Muted>- "Hello World!"</Muted>
                  </CompRow>
                </ComponentTree>
              </LeftColumn>

              <Center>
                <DesignToolbar>
                  <DesignItem $w={14}><Icon name="lay1" /></DesignItem>
                  <DesignItem $w={15}><Icon name="lay2" /></DesignItem>
                  <DesignItem $w={13.5}><Icon name="lay3" /></DesignItem>
                  <Sep />
                  <DesignItem $w={17}><Icon name="orient" /></DesignItem>
                  <Sep />
                  <DesignItem $w={41}><Icon name="phone" />Nexus 4▾</DesignItem>
                  <Slot $w={4} />
                  <DesignItem $w={25}><Icon name="android" />26▾</DesignItem>
                  <Sep />
                  <DesignItem $w={44}><Icon name="theme" size={8} />AppTheme</DesignItem>
                  <Sep />
                  <DesignItem $w={50}><Icon name="globe" />Language▾</DesignItem>
                  <Sep />
                  <Slot $w={2} />
                  <DesignItem $w={20}><Icon name="layout" />▾</DesignItem>
                </DesignToolbar>
                <ZoomBar>
                  <Icon name="minus" />
                  <span>46%</span>
                  <Slot $w={3} />
                  <Icon name="plus" />
                  <Slot $w={3} />
                  <Icon name="fit" />
                  <Slot $w={3} />
                  <Icon name="hand" />
                  <Sep />
                  <Slot $w={3} />
                  <Icon name="bell" />
                </ZoomBar>
                <RulerTop>
                  {ticks.map((t) => (
                    <RulerCell key={t}>{t}</RulerCell>
                  ))}
                </RulerTop>
                <CanvasRow>
                  <RulerLeft>
                    {ticks.map((t) => (
                      <RulerLeftCell key={t}>
                        <span>{t}</span>
                      </RulerLeftCell>
                    ))}
                  </RulerLeft>
                  <Canvas>
                    <Phone>
                      <StatusStrip>
                        <Icon name="wifi" size={11} />
                        <Icon name="battery" size={10} />
                        <span>7:00</span>
                      </StatusStrip>
                      <AppBar>HelloWorld</AppBar>
                      <PhoneContent>
                        <HelloBox>Hello World!</HelloBox>
                      </PhoneContent>
                      <NavStrip>
                        <Icon name="navBack" size={13} />
                        <Icon name="navHome" size={13} />
                        <Icon name="navRecent" size={13} />
                      </NavStrip>
                    </Phone>
                    <Blueprint>
                      <BlueTop />
                      <BlueMiddle>
                        <BlueBox>Hello World!</BlueBox>
                      </BlueMiddle>
                      <BlueBottom />
                    </Blueprint>
                    <GuideV $x={28} />
                    <GuideV $x={237} />
                    <GuideH $y={29} />
                    <GuideH $y={376} />
                    <ResizeHandle width="12" height="12" viewBox="0 0 12 12">
                      <path d="M1 10l9-9M4 11l7-7" stroke="#aaa" strokeWidth="0.8" fill="none" />
                    </ResizeHandle>
                  </Canvas>
                </CanvasRow>
              </Center>

              <Properties>
                <PanelHeader>
                  <HeaderTitle>Properties</HeaderTitle>
                  <Grow />
                  <Icon name="search" />
                  <Slot $w={3} />
                  <Icon name="swap" />
                  <Sep />
                  <Icon name="gear" size={11} />
                  <Slot $w={1} />
                  <Icon name="pinR" size={9} />
                </PanelHeader>
              </Properties>
            </DesignArea>

            <DesignTabs>
              <DesignTab $active>Design</DesignTab>
              <DesignTab>Text</DesignTab>
            </DesignTabs>
          </Editor>

          <SideStrip $right>
            <SideTab $right $h={40} $mt={6}>
              <Icon name="gradle" size={9} />
              <span>Gradle</span>
            </SideTab>
            <Grow />
            <SideTab $right $h={60}>
              <Icon name="android" size={9} />
              <span>Android Model</span>
            </SideTab>
          </SideStrip>
        </Body>

        <BottomBar>
          <BottomItem>
            <Icon name="msg" size={9} />
            <span><u>0</u>: Messages</span>
          </BottomItem>
          <BottomItem $ml={13}>
            <Icon name="term" size={9} />
            Terminal
          </BottomItem>
          <BottomItem $ml={14}>
            <Icon name="android" size={9} />
            <span><u>6</u>: Android Monitor</span>
          </BottomItem>
          <BottomItem $ml={13}>
            <Icon name="todo" size={9} />
            TODO
          </BottomItem>
          <Grow />
          <BottomItem>
            <Icon name="bubble" />
            Event Log
          </BottomItem>
          <BottomItem $ml={13}>
            <Icon name="console" size={9} />
            Gradle Console
          </BottomItem>
        </BottomBar>

        <StatusBar>
          <Icon name="frame" />
          <span>Gradle build finished in 3s 702ms (2 minutes ago)</span>
          <StatusRight>
            <span>n/a</span>
            <Slot $w={9} />
            <span>n/a</span>
            <Slot $w={7} />
            <span>Context: &lt;no context&gt;</span>
            <Slot $w={15} />
            <Icon name="lock" size={8} />
            <Slot $w={5} />
            <Icon name="frame" size={10} />
          </StatusRight>
        </StatusBar>

        <Taskbar />
        <GreenBubble>▪▪</GreenBubble>
      </Window>
    </>
  );
}
